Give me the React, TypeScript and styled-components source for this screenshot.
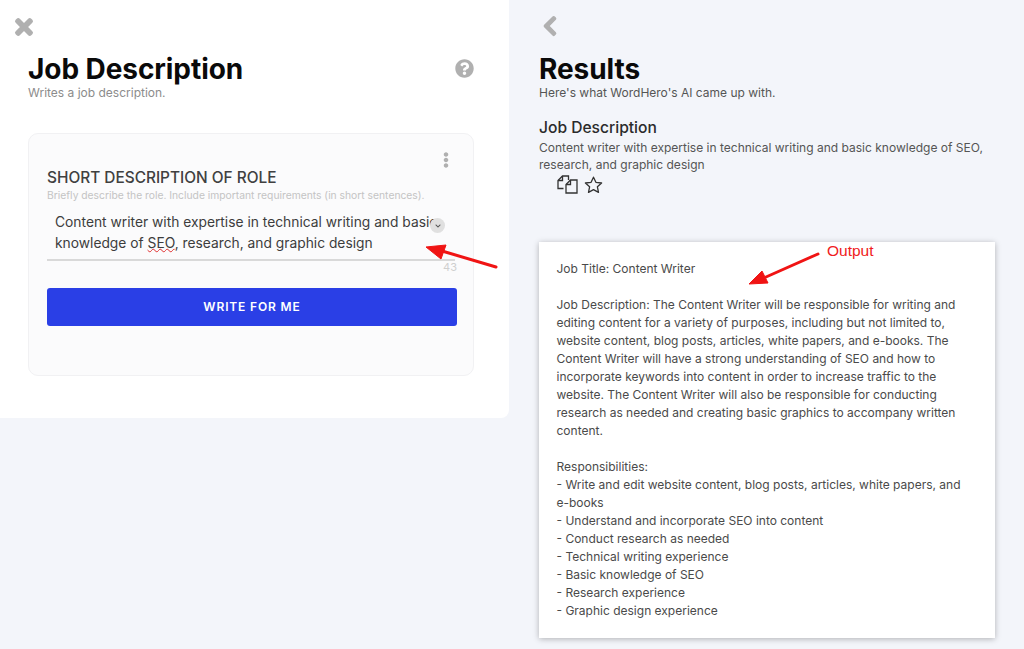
import React from 'react'
import styled, { createGlobalStyle } from 'styled-components'
import { FaTimes, FaQuestionCircle, FaChevronLeft, FaEllipsisV, FaChevronDown } from 'react-icons/fa'

const GlobalStyle = createGlobalStyle`
  html, body {
    margin: 0;
    padding: 0;
    background: #f3f5fa;
    font-family: Inter, 'Liberation Sans', sans-serif;
    overflow: hidden;
  }
`

const Page = styled.div`
  position: relative;
  display: flex;
  align-items: flex-start;
  width: 1024px;
  height: 649px;
  overflow: hidden;
`

const LeftPanel = styled.section`
  box-sizing: border-box;
  width: 509px;
  height: 418px;
  padding: 15px 35px 0 28px;
  background: #fff;
  border-bottom-right-radius: 8px;
`

const RightPanel = styled.section`
  box-sizing: border-box;
  width: 515px;
  padding: 15px 29px 0 30px;
`

const NavIcon = styled.div<{ $offset: number; $size: number }>`
  height: 22px;
  margin-left: ${(p) => p.$offset}px;
  color: #b0b0b0;
  font-size: ${(p) => p.$size}px;
  line-height: 22px;
  svg { display: block; stroke: currentColor; stroke-width: 30px; }
`

const HeadRow = styled.div`
  display: flex;
  justify-content: space-between;
  align-items: flex-start;
  margin-top: 15px;
`

const Title = styled.h1`
  margin: 0;
  color: #0a0a0a;
  font-size: 28px;
  line-height: 34px;
  font-weight: 700;
  letter-spacing: -0.07px;
`

const HelpButton = styled.div`
  margin-top: 7px;
  color: #b0b0b0;
  font-size: 19px;
  line-height: 19px;
  svg { display: block; }
`

const Subtitle = styled.p<{ $dark?: boolean }>`
  margin: -1px 0 0;
  color: ${(p) => (p.$dark ? '#555' : '#8c8c8c')};
  font-size: 12px;
  line-height: 15px;
`

const Card = styled.div`
  position: relative;
  box-sizing: border-box;
  height: 243px;
  margin-top: 33px;
  padding: 35px 18px 0;
  background: #fbfbfc;
  border: 1px solid #f1f1f3;
  border-radius: 10px;
`

const MoreButton = styled.div`
  position: absolute;
  top: 18px;
  right: 19px;
  color: #b0b0b0;
  font-size: 16px;
  line-height: 16px;
  svg { display: block; }
`

const FieldLabel = styled.div`
  color: #404040;
  font-size: 15.4px;
  line-height: 18px;
  font-weight: 500;
`

const FieldHint = styled.div`
  margin-top: 1px;
  color: #c4c4c4;
  font-size: 10.3px;
  line-height: 14px;
`

const TextBox = styled.div`
  position: relative;
  box-sizing: border-box;
  height: 54px;
  margin-top: 5px;
  padding: 5px 0 0 8px;
  border-bottom: 2px solid #d9d9d9;
  color: #3d3d3d;
  font-size: 13.8px;
  line-height: 21px;
`

const TextLine = styled.div`
  height: 21px;
  white-space: nowrap;
`

const Misspelled = styled.span`
  text-decoration: underline wavy #e03030 1px;
  text-underline-offset: 0;
`

const ScrollKnob = styled.div`
  position: absolute;
  top: 11px;
  right: 10px;
  display: flex;
  align-items: center;
  justify-content: center;
  width: 15px;
  height: 15px;
  border-radius: 50%;
  background: #e0e0e0;
  color: #555;
  font-size: 6px;
`

const Counter = styled.div`
  width: 410px;
  margin-top: -1px;
  color: #cfcfcf;
  font-size: 11px;
  line-height: 14px;
  text-align: right;
`

const WriteButton = styled.button`
  display: block;
  width: 410px;
  height: 38px;
  margin-top: 14px;
  padding: 0 0 2px;
  border: 0;
  border-radius: 3px;
  background: #2a3fe6;
  color: #fff;
  font-family: inherit;
  font-size: 12px;
  font-weight: 600;
  letter-spacing: 0.85px;
`

const ResultName = styled.h2`
  margin: 18px 0 0;
  color: #2b2b2b;
  font-size: 15.6px;
  line-height: 20px;
  font-weight: 500;
`

const ResultText = styled.p`
  margin: 1px 0 0;
  color: #555;
  font-size: 12.03px;
  line-height: 17px;
`

const ActionRow = styled.div`
  display: flex;
  align-items: center;
  gap: 6px;
  margin: 2px 0 0 18px;
  color: #333;
  svg { display: block; }
`

const OutputCard = styled.article`
  box-sizing: border-box;
  width: 456px;
  height: 396px;
  margin-top: 48px;
  padding: 17.5px 18px 0 17.5px;
  background: #fff;
  box-shadow: 0 1px 6px rgba(0, 0, 0, 0.28);
  color: #4a4a4a;
  font-size: 12px;
  line-height: 18px;
`

const OutputLine = styled.div`
  min-height: 18px;
  white-space: nowrap;
`

const Annotation = styled.svg`
  position: absolute;
  top: 0;
  left: 0;
  pointer-events: none;
`

const OutputLabel = styled.div`
  position: absolute;
  top: 242px;
  left: 827px;
  color: #f02020;
  font-family: 'Liberation Sans', Arial, sans-serif;
  font-size: 15.5px;
  line-height: 18px;
`

const outputLines = [
  'Job Title: Content Writer',
  '',
  'Job Description: The Content Writer will be responsible for writing and',
  'editing content for a variety of purposes, including but not limited to,',
  'website content, blog posts, articles, white papers, and e-books. The',
  'Content Writer will have a strong understanding of SEO and how to',
  'incorporate keywords into content in order to increase traffic to the',
  'website. The Content Writer will also be responsible for conducting',
  'research as needed and creating basic graphics to accompany written',
  'content.',
  '',
  'Responsibilities:',
  '- Write and edit website content, blog posts, articles, white papers, and',
  'e-books',
  '- Understand and incorporate SEO into content',
  '- Conduct research as needed',
  '- Technical writing experience',
  '- Basic knowledge of SEO',
  '- Research experience',
  '- Graphic design experience',
]

const App: React.FC = () => {
  return (
    <Page>
      <GlobalStyle />
      <LeftPanel>
        <NavIcon $offset={-16} $size={24}>
          <FaTimes />
        </NavIcon>
        <HeadRow>
          <Title>Job Description</Title>
          <HelpButton>
            <FaQuestionCircle />
          </HelpButton>
        </HeadRow>
        <Subtitle>Writes a job description.</Subtitle>
        <Card>
          <MoreButton>
            <FaEllipsisV />
          </MoreButton>
          <FieldLabel>SHORT DESCRIPTION OF ROLE</FieldLabel>
          <FieldHint>Briefly describe the role. Include important requirements (in short sentences).</FieldHint>
          <TextBox>
            <TextLine>Content writer with expertise in technical writing and basic</TextLine>
            <TextLine>
              knowledge of <Misspelled>SEO</Misspelled>, research, and graphic design
            </TextLine>
            <ScrollKnob>
              <FaChevronDown />
            </ScrollKnob>
          </TextBox>
          <Counter>43</Counter>
          <WriteButton>WRITE FOR ME</WriteButton>
        </Card>
      </LeftPanel>
      <RightPanel>
        <NavIcon $offset={0} $size={22}>
          <FaChevronLeft />
        </NavIcon>
        <HeadRow>
          <Title>Results</Title>
        </HeadRow>
        <Subtitle $dark>Here's what WordHero's AI came up with.</Subtitle>
        <ResultName>Job Description</ResultName>
        <ResultText>
          Content writer with expertise in technical writing and basic knowledge of SEO,
          <br />
          research, and graphic design
        </ResultText>
        <ActionRow>
          <svg width="21" height="19" viewBox="0 0 21 19" fill="none" stroke="currentColor" strokeWidth="1.3">
            <path d="M6.5 13.5H1V5.5L5.5 1H11.5V5" />
            <path d="M1 5.5H5.5V1" />
            <path d="M9 18V9.5L13.5 5H20V18Z" />
            <path d="M9 9.5H13.5V5" />
          </svg>
          <svg width="19" height="18" viewBox="0 0 19 18" fill="none" stroke="currentColor" strokeWidth="1.3" strokeLinejoin="round">
            <path d="M9.5 1.2L11.9 6.3L17.6 7L13.4 10.8L14.5 16.4L9.5 13.6L4.5 16.4L5.6 10.8L1.4 7L7.1 6.3Z" />
          </svg>
        </ActionRow>
        <OutputCard>
          {outputLines.map((line, i) => (
            <OutputLine key={i}>{line}</OutputLine>
          ))}
        </OutputCard>
      </RightPanel>
      <Annotation width="1024" height="649" viewBox="0 0 1024 649">
        <path d="M496 267L442 251" stroke="#f01414" strokeWidth="3" strokeLinecap="round" />
        <path d="M426 247L446 245L441 259Z" fill="#f01414" stroke="#f01414" strokeLinejoin="round" />
        <path d="M818 254L766 277" stroke="#f01414" strokeWidth="3" strokeLinecap="round" />
        <path d="M749 284L762 271L768 283Z" fill="#f01414" stroke="#f01414" strokeLinejoin="round" />
      </Annotation>
      <OutputLabel>Output</OutputLabel>
    </Page>
  )
}

export default App
